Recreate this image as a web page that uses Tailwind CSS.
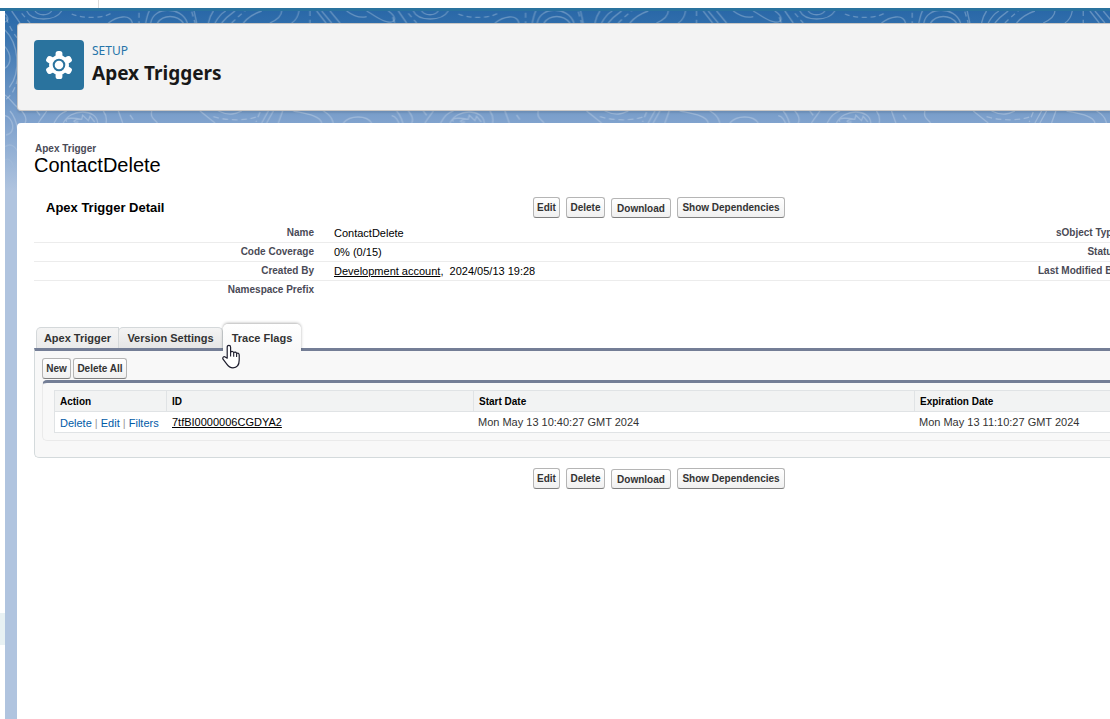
<!DOCTYPE html>
<html lang="en">
<head>
<meta charset="utf-8">
<title>Apex Triggers | Setup</title>
<script src="https://cdn.jsdelivr.net/npm/@tailwindcss/browser@4"></script>
</head>
<body class="flex h-screen flex-col overflow-hidden bg-white font-['Liberation_Sans',Arial,sans-serif] text-[11px] leading-[13px] text-black">
<div class="flex h-2 shrink-0"><div class="w-[99px] border-r border-[#dddbda]"></div></div>
<div class="h-[3px] shrink-0 bg-[#2a739e]"></div>
<div class="flex min-h-0 flex-1">
  <aside class="w-[5px] shrink-0 bg-white pt-[602px]"><div class="h-8 bg-[#e8f1f3]"></div></aside>
  <main class="relative flex min-w-0 flex-1 flex-col overflow-hidden bg-[linear-gradient(to_bottom,#2a68a8_0px,#2f6dab_12px,#7fa2cd_110px,#b0c4df_180px)] pt-3 pl-3">
    <svg class="absolute inset-x-0 top-0 h-[170px] w-full" aria-hidden="true">
      <defs>
        <linearGradient id="fade" x1="0" y1="0" x2="0" y2="1"><stop offset=".6" stop-color="#fff"/><stop offset=".95" stop-color="#fff" stop-opacity="0"/></linearGradient>
        <mask id="fadeMask"><rect width="100%" height="170" fill="url(#fade)"/></mask>
        <pattern id="topo" width="1160" height="600" patternUnits="userSpaceOnUse" patternTransform="translate(-5 -11) scale(.3333)">
          <g fill="none" stroke="#fff" stroke-opacity=".27" stroke-width="4">
            <path d="M-60 33C-30 50-20 62 5 66C30 69 30 50 5 33M35 33L60 69M80 33C95 65 165 65 185 33M105 33C115 48 145 48 155 33M325 69C350 50 390 40 397 69M437 69C440 55 443 40 448 33M452 69C460 18 545 18 562 69M472 69C490 43 530 43 550 69M582 33L590 69M625 69C628 55 633 43 640 33M645 69C655 50 665 40 677 33M665 69C680 50 695 40 705 33M730 69C750 45 770 38 785 33M810 69C830 60 845 50 845 33M875 69C890 60 895 45 897 33M950 33L978 69M965 33L995 69M990 33L1020 69M1040 33C1060 48 1080 55 1100 50M1100 33C1130 50 1140 62 1165 66C1190 69 1190 50 1165 33"/>
            <path stroke-dasharray="15 11" d="M65 40L90 69M215 42C250 58 320 55 340 35M417 38V69M695 69C712 52 722 44 735 33M930 33V69M575 35L585 69"/>
            <path d="M-90 352C-50 335-35 333-20 333M65 333C80 350 80 360 75 369M110 333L120 346M115 369C125 352 135 342 140 333M162 369C175 345 185 338 200 333M190 369C210 325 290 325 293 369M200 365C190 350 230 355 245 358M235 366C210 368 225 356 245 358L248 346L265 362L270 349L284 366M310 333C322 350 320 360 318 369M355 333L368 369M455 333C450 355 465 358 472 369M600 333L645 369M655 333C690 350 710 340 725 333M785 369L805 333M800 369L820 333M835 369L848 333M880 333C910 340 960 345 965 369M970 333C1000 350 995 360 1000 369M1030 369C1050 345 1100 345 1115 369"/>
            <path stroke-dasharray="17 11" d="M390 345L405 367M640 350C690 365 750 360 770 350M780 336L768 366"/>
            <path d="M15 90C55 130 65 215 28 262M15 140C35 165 35 190 15 205M15 285C30 295 42 315 53 322M15 347C38 350 52 400 18 405M30 333C45 350 50 369 53 390M15 440C30 430 45 435 55 460M15 480C30 470 40 490 45 520"/>
            <path stroke-dasharray="17 11" d="M18 52C28 80 40 100 53 115M53 235C45 270 35 285 15 300"/>
          </g>
        </pattern>
      </defs>
      <rect width="100%" height="170" fill="url(#topo)" mask="url(#fadeMask)"/>
    </svg>

    <header class="relative flex h-[88px] shrink-0 items-start rounded-l border border-r-0 border-[#c9c7c5] bg-[#f3f3f3] pt-4 pl-4 shadow-[0_2px_2px_rgba(0,0,0,0.1)]">
      <svg class="size-[50px] shrink-0" viewBox="0 0 50 50" aria-hidden="true">
        <rect width="50" height="50" rx="4" fill="#2a739e"/>
        <g fill="#fff">
          <circle cx="25" cy="25" r="10"/>
          <rect x="21.6" y="11" width="6.8" height="28" rx="2.6"/><rect x="21.6" y="11" width="6.8" height="28" rx="2.6" transform="rotate(60 25 25)"/><rect x="21.6" y="11" width="6.8" height="28" rx="2.6" transform="rotate(120 25 25)"/>
        </g>
        <circle cx="25" cy="25" r="5.3" fill="#fff" stroke="#2a739e" stroke-width="2"/>
      </svg>
      <div class="pl-2 font-['Noto_Sans',sans-serif]">
        <p class="pt-0.5 text-xs leading-[18px] text-[#2574a9]">SETUP</p>
        <h1 class="text-[19px] leading-[26px] font-bold text-[#181818]">Apex Triggers</h1>
      </div>
    </header>

    <section class="relative mt-3 flex-1 rounded-tl bg-white pt-5 pl-[17px]">
      <h2><span class="block pl-px text-[10px] leading-3 font-bold text-[#4a4a56]">Apex Trigger</span><span class="block text-xl leading-5">ContactDelete</span></h2>

      <div class="mt-[22px] flex items-center">
        <h3 class="w-[499px] pl-3 text-[13px] leading-5 font-bold">Apex Trigger Detail</h3>
        <div class="flex items-end gap-1.5 text-[10px] font-bold text-[#333]">
          <button class="h-[21px] w-[27px] rounded-[3px] border border-[#b5b5b5] border-b-[#7f7f7f] bg-linear-to-b from-white to-[#f0f0f0]">Edit</button>
          <button class="h-[21px] w-[39px] rounded-[3px] border border-[#b5b5b5] border-b-[#7f7f7f] bg-linear-to-b from-white to-[#f0f0f0]">Delete</button>
          <button class="h-5 w-[60px] rounded-[3px] border border-[#b5b5b5] border-b-[#7f7f7f] bg-linear-to-b from-white to-[#f0f0f0]">Download</button>
          <button class="h-[21px] w-[108px] rounded-[3px] border border-[#b5b5b5] border-b-[#7f7f7f] bg-linear-to-b from-white to-[#f0f0f0] whitespace-nowrap">Show Dependencies</button>
        </div>
      </div>

      <div class="-mr-2 mt-1.5">
        <table class="w-full border-separate border-spacing-0">
          <tbody>
            <tr class="h-[19px]"><th class="w-[280px] border-b border-[#ececec] p-0 pb-0.5 text-right text-[10px] font-bold text-[#4a4a56]">Name</th><td class="border-b border-[#ececec] py-0 pl-5">ContactDelete</td><th class="border-b border-[#ececec] p-0 pb-0.5 text-right text-[10px] font-bold text-[#4a4a56]">sObject Type</th></tr>
            <tr class="h-[19px]"><th class="border-b border-[#ececec] p-0 pb-0.5 text-right text-[10px] font-bold text-[#4a4a56]">Code Coverage</th><td class="border-b border-[#ececec] py-0 pl-5">0% (0/15)</td><th class="border-b border-[#ececec] p-0 pb-0.5 text-right text-[10px] font-bold text-[#4a4a56]">Status</th></tr>
            <tr class="h-[19px]"><th class="border-b border-[#ececec] p-0 pb-0.5 text-right text-[10px] font-bold text-[#4a4a56]">Created By</th><td class="border-b border-[#ececec] py-0 pl-5"><a href="#" class="underline">Development account</a>,&nbsp; 2024/05/13 19:28</td><th class="border-b border-[#ececec] p-0 pb-0.5 text-right text-[10px] font-bold text-[#4a4a56]">Last Modified By</th></tr>
            <tr class="h-[19px]"><th class="p-0 pb-0.5 text-right text-[10px] font-bold text-[#4a4a56]">Namespace Prefix</th><td></td><td></td></tr>
          </tbody>
        </table>
      </div>

      <div class="mt-5 flex h-7 items-end pl-0.5 text-[11px] font-bold text-[#333]" role="tablist">
        <button role="tab" class="h-[21px] w-[83px] rounded-tl-[5px] border border-b-0 border-[#d4d8da] bg-linear-to-b from-[#f4f4f4] to-[#ebebeb] whitespace-nowrap">Apex Trigger</button>
        <button role="tab" class="-ml-px h-[21px] w-[105px] rounded-t-[5px] border border-b-0 border-[#d4d8da] bg-linear-to-b from-[#f4f4f4] to-[#e6e6e6] whitespace-nowrap">Version Settings</button>
        <button role="tab" aria-selected="true" class="relative z-10 -mb-[3px] h-[27px] w-[78px] rounded-t-[5px] bg-linear-to-b from-white to-[#f8f8f8] pt-0.5 whitespace-nowrap shadow-[0_-1px_3px_rgba(0,0,0,0.3)] [clip-path:inset(-4px_-4px_0_-4px)]">Trace Flags</button>
      </div>

      <div class="rounded-bl-[5px] border-t-3 border-b border-l border-t-[#747e96] border-b-[#d4dadc] border-l-[#d4dadc] bg-[#f8f8f8] pt-[7px] pb-4 pl-[7px]">
        <div class="flex gap-0.5 text-[10px] font-bold text-[#333]">
          <button class="h-[21px] w-[29px] rounded-[3px] border border-[#b5b5b5] border-b-[#7f7f7f] bg-linear-to-b from-white to-[#f0f0f0]">New</button>
          <button class="h-[21px] w-[54px] rounded-[3px] border border-[#b5b5b5] border-b-[#7f7f7f] bg-linear-to-b from-white to-[#f0f0f0] whitespace-nowrap">Delete All</button>
        </div>
        <div class="mt-px rounded-l-[5px] border-t-3 border-b border-l border-t-[#747e96] border-b-[#eaeaea] border-l-[#eaeaea] pt-[7px] pb-[7px] pl-[11px]">
          <table class="w-full table-fixed border-separate border-spacing-0 border-t border-l border-[#e0e3e5] bg-white">
            <thead>
              <tr class="h-[21px] bg-[#f2f3f3] text-left text-[10px]">
                <th class="w-[112px] border-r border-b border-[#e0e3e5] py-0 pl-[5px]">Action</th>
                <th class="w-[307px] border-r border-b border-[#e0e3e5] py-0 pl-[5px]">ID</th>
                <th class="w-[441px] border-r border-b border-[#e0e3e5] py-0 pl-[5px]">Start Date</th>
                <th class="border-b border-[#e0e3e5] py-0 pl-[5px]">Expiration Date</th>
              </tr>
            </thead>
            <tbody>
              <tr class="h-[21px]">
                <td class="border-b border-[#e0e3e5] pt-[3px] pb-0 pl-[5px] whitespace-nowrap text-[#999]"><a href="#" class="text-[#015ba7]">Delete</a> | <a href="#" class="text-[#015ba7]">Edit</a> | <a href="#" class="text-[#015ba7]">Filters</a></td>
                <td class="border-b border-[#e0e3e5] py-0 pl-[5px]"><a href="#" class="underline">7tfBI0000006CGDYA2</a></td>
                <td class="border-b border-[#e0e3e5] py-0 pl-1 text-[#333]">Mon May 13 10:40:27 GMT 2024</td>
                <td class="border-b border-[#e0e3e5] py-0 pl-1 whitespace-nowrap text-[#333]">Mon May 13 11:10:27 GMT 2024</td>
              </tr>
            </tbody>
          </table>
        </div>
      </div>

      <div class="mt-2.5 flex items-end gap-1.5 pl-[499px] text-[10px] font-bold text-[#333]">
        <button class="h-[21px] w-[27px] rounded-[3px] border border-[#b5b5b5] border-b-[#7f7f7f] bg-linear-to-b from-white to-[#f0f0f0]">Edit</button>
        <button class="h-[21px] w-[39px] rounded-[3px] border border-[#b5b5b5] border-b-[#7f7f7f] bg-linear-to-b from-white to-[#f0f0f0]">Delete</button>
        <button class="h-5 w-[60px] rounded-[3px] border border-[#b5b5b5] border-b-[#7f7f7f] bg-linear-to-b from-white to-[#f0f0f0]">Download</button>
        <button class="h-[21px] w-[108px] rounded-[3px] border border-[#b5b5b5] border-b-[#7f7f7f] bg-linear-to-b from-white to-[#f0f0f0] whitespace-nowrap">Show Dependencies</button>
      </div>

      <svg class="absolute top-[221px] left-[205px] z-20 h-[25px] w-[18px]" viewBox="0 0 18 25" aria-hidden="true">
        <path d="M5.2 14.2V3.2C5.2.7 8.6.7 8.6 3.2V8.2C9.6 7 11.3 7.4 11.7 8.6C12.7 7.6 14.2 8.1 14.6 9.4C15.8 8.6 17.2 9.4 17.2 11V16C17.2 21 14.6 23.8 11 23.8C8.2 23.8 6.4 22.6 5 20.4L1 15.2C.2 13.4 1.8 12.2 3.2 13Z" fill="#fff" stroke="#1c1c2c" stroke-width="1.2" stroke-linejoin="round"/>
        <path d="M8.6 8V12.6M11.7 8.8V12.8M14.6 9.6V13" fill="none" stroke="#1c1c2c" stroke-width="1.1"/>
      </svg>
    </section>
  </main>
</div>
</body>
</html>
